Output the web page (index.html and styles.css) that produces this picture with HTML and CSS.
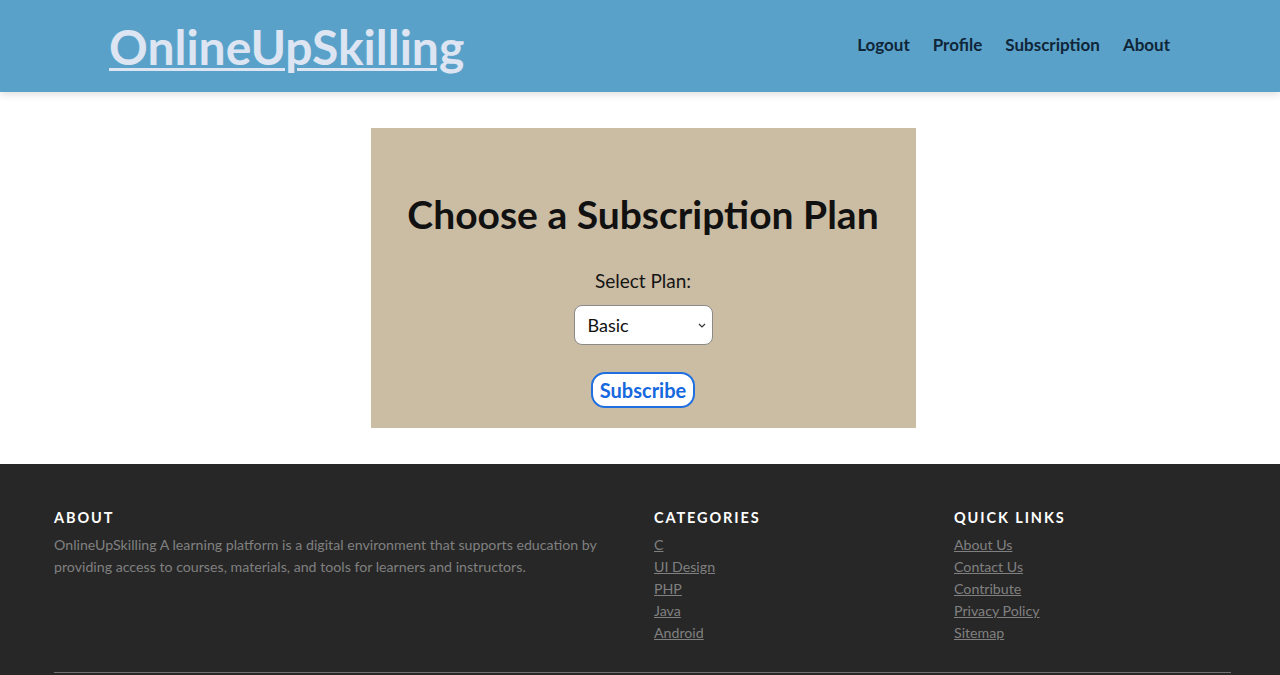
FILE: index.html
```html
<!DOCTYPE html>
<html lang="en">
<head>
<meta charset="utf-8">
<title>OnlineUpSkilling - Subscription</title>
<link rel="stylesheet" href="styles.css">
</head>
<body>
<header class="topbar">
  <a class="logo" href="#">OnlineUpSkilling</a>
  <nav class="nav">
    <a href="#">Logout</a>
    <a href="#">Profile</a>
    <a href="#">Subscription</a>
    <a href="#">About</a>
  </nav>
</header>

<main class="main">
  <section class="plan-card">
    <h1 class="plan-title">Choose a Subscription Plan</h1>
    <form class="plan-form">
      <label class="plan-label" for="plan">Select Plan:</label>
      <div class="select-wrap">
        <select id="plan" class="plan-select">
          <option>Basic</option>
          <option>Standard</option>
          <option>Premium</option>
        </select>
        <svg class="chev" width="8" height="5" viewBox="0 0 8 5"><path d="M1 1l3 3 3-3" fill="none" stroke="#333" stroke-width="1.2"/></svg>
      </div>
      <button type="button" class="subscribe-btn">Subscribe</button>
    </form>
  </section>
</main>

<footer class="site-footer">
  <div class="footer-inner">
    <div class="footer-grid">
      <div class="footer-col about-col">
        <h6 class="footer-heading">About</h6>
        <p class="footer-text">OnlineUpSkilling A learning platform is a digital environment that supports education by providing access to courses, materials, and tools for learners and instructors.</p>
      </div>
      <div class="footer-col">
        <h6 class="footer-heading">Categories</h6>
        <ul class="footer-links">
          <li><a href="#">C</a></li>
          <li><a href="#">UI Design</a></li>
          <li><a href="#">PHP</a></li>
          <li><a href="#">Java</a></li>
          <li><a href="#">Android</a></li>
        </ul>
      </div>
      <div class="footer-col">
        <h6 class="footer-heading">Quick Links</h6>
        <ul class="footer-links">
          <li><a href="#">About Us</a></li>
          <li><a href="#">Contact Us</a></li>
          <li><a href="#">Contribute</a></li>
          <li><a href="#">Privacy Policy</a></li>
          <li><a href="#">Sitemap</a></li>
        </ul>
      </div>
    </div>
    <hr class="footer-rule">
  </div>
</footer>
</body>
</html>
```

FILE: styles.css
```css
* { box-sizing: border-box; }

html, body {
  margin: 0;
  padding: 0;
}

body {
  font-family: "Lato", "Noto Sans", sans-serif;
  background: #ffffff;
  color: #111;
}

.topbar {
  height: 92px;
  background: #5aa1ca;
  display: flex;
  align-items: center;
  justify-content: space-between;
  padding: 0 110px 0 109px;
  box-shadow: 0 2px 8px rgba(0, 0, 0, 0.14);
  position: relative;
  z-index: 1;
}

.logo {
  font-size: 48px;
  font-weight: 700;
  color: #dce5f1;
  text-decoration: underline;
  text-decoration-thickness: 3px;
  text-underline-offset: 3px;
  line-height: 1;
  margin-top: 2px;
}

.nav {
  display: flex;
  gap: 23px;
  margin-top: -4px;
}

.nav a {
  color: #0f2638;
  text-decoration: none;
  font-size: 17px;
  font-weight: 700;
}

.main {
  padding: 36px 0 36px 6px;
  display: flex;
  justify-content: center;
}

.plan-card {
  width: 545px;
  height: 300px;
  background: #cbbca4;
  padding: 62px 0 20px;
  display: flex;
  flex-direction: column;
  align-items: center;
}

.plan-title {
  margin: 0;
  font-size: 39px;
  line-height: 48px;
  font-weight: 700;
  color: #111;
  white-space: nowrap;
}

.plan-form {
  display: flex;
  flex-direction: column;
  align-items: center;
  margin-top: 31px;
}

.plan-label {
  font-size: 19px;
  line-height: 24px;
  color: #151515;
}

.select-wrap {
  position: relative;
  margin-top: 12px;
}

.plan-select {
  appearance: none;
  -webkit-appearance: none;
  width: 139px;
  height: 40px;
  border: 1px solid #8a8a8a;
  border-radius: 8px;
  background: #fff;
  font-family: inherit;
  font-size: 18px;
  color: #111;
  padding: 0 24px 0 13px;
  display: block;
}

.chev {
  position: absolute;
  right: 7px;
  top: 18px;
  pointer-events: none;
}

.subscribe-btn {
  margin-top: 27px;
  height: 36px;
  border: 2px solid #1f6fe0;
  border-radius: 14px;
  background: #fff;
  color: #1668de;
  font-family: inherit;
  font-size: 20px;
  font-weight: 700;
  padding: 0 7px;
  cursor: pointer;
}

.site-footer {
  background: #272727;
  padding-top: 44px;
  color: #808080;
  font-size: 14.2px;
  line-height: 22px;
}

.footer-inner {
  padding: 0 49px 1px 54px;
}

.footer-grid {
  display: grid;
  grid-template-columns: 600px 300px 1fr;
}

.about-col {
  padding-right: 30px;
}

.footer-heading {
  margin: 0 0 7px;
  font-size: 14.5px;
  line-height: 19px;
  font-weight: 700;
  color: #fff;
  text-transform: uppercase;
  letter-spacing: 1.9px;
}

.footer-text {
  margin: 0;
}

.footer-links {
  list-style: none;
  margin: 0;
  padding: 0;
}

.footer-links a {
  color: #808080;
  text-decoration: underline;
}

.footer-rule {
  margin: 28px 0 20px;
  border: 0;
  border-top: 1px solid rgba(187, 187, 187, 0.5);
}
```
